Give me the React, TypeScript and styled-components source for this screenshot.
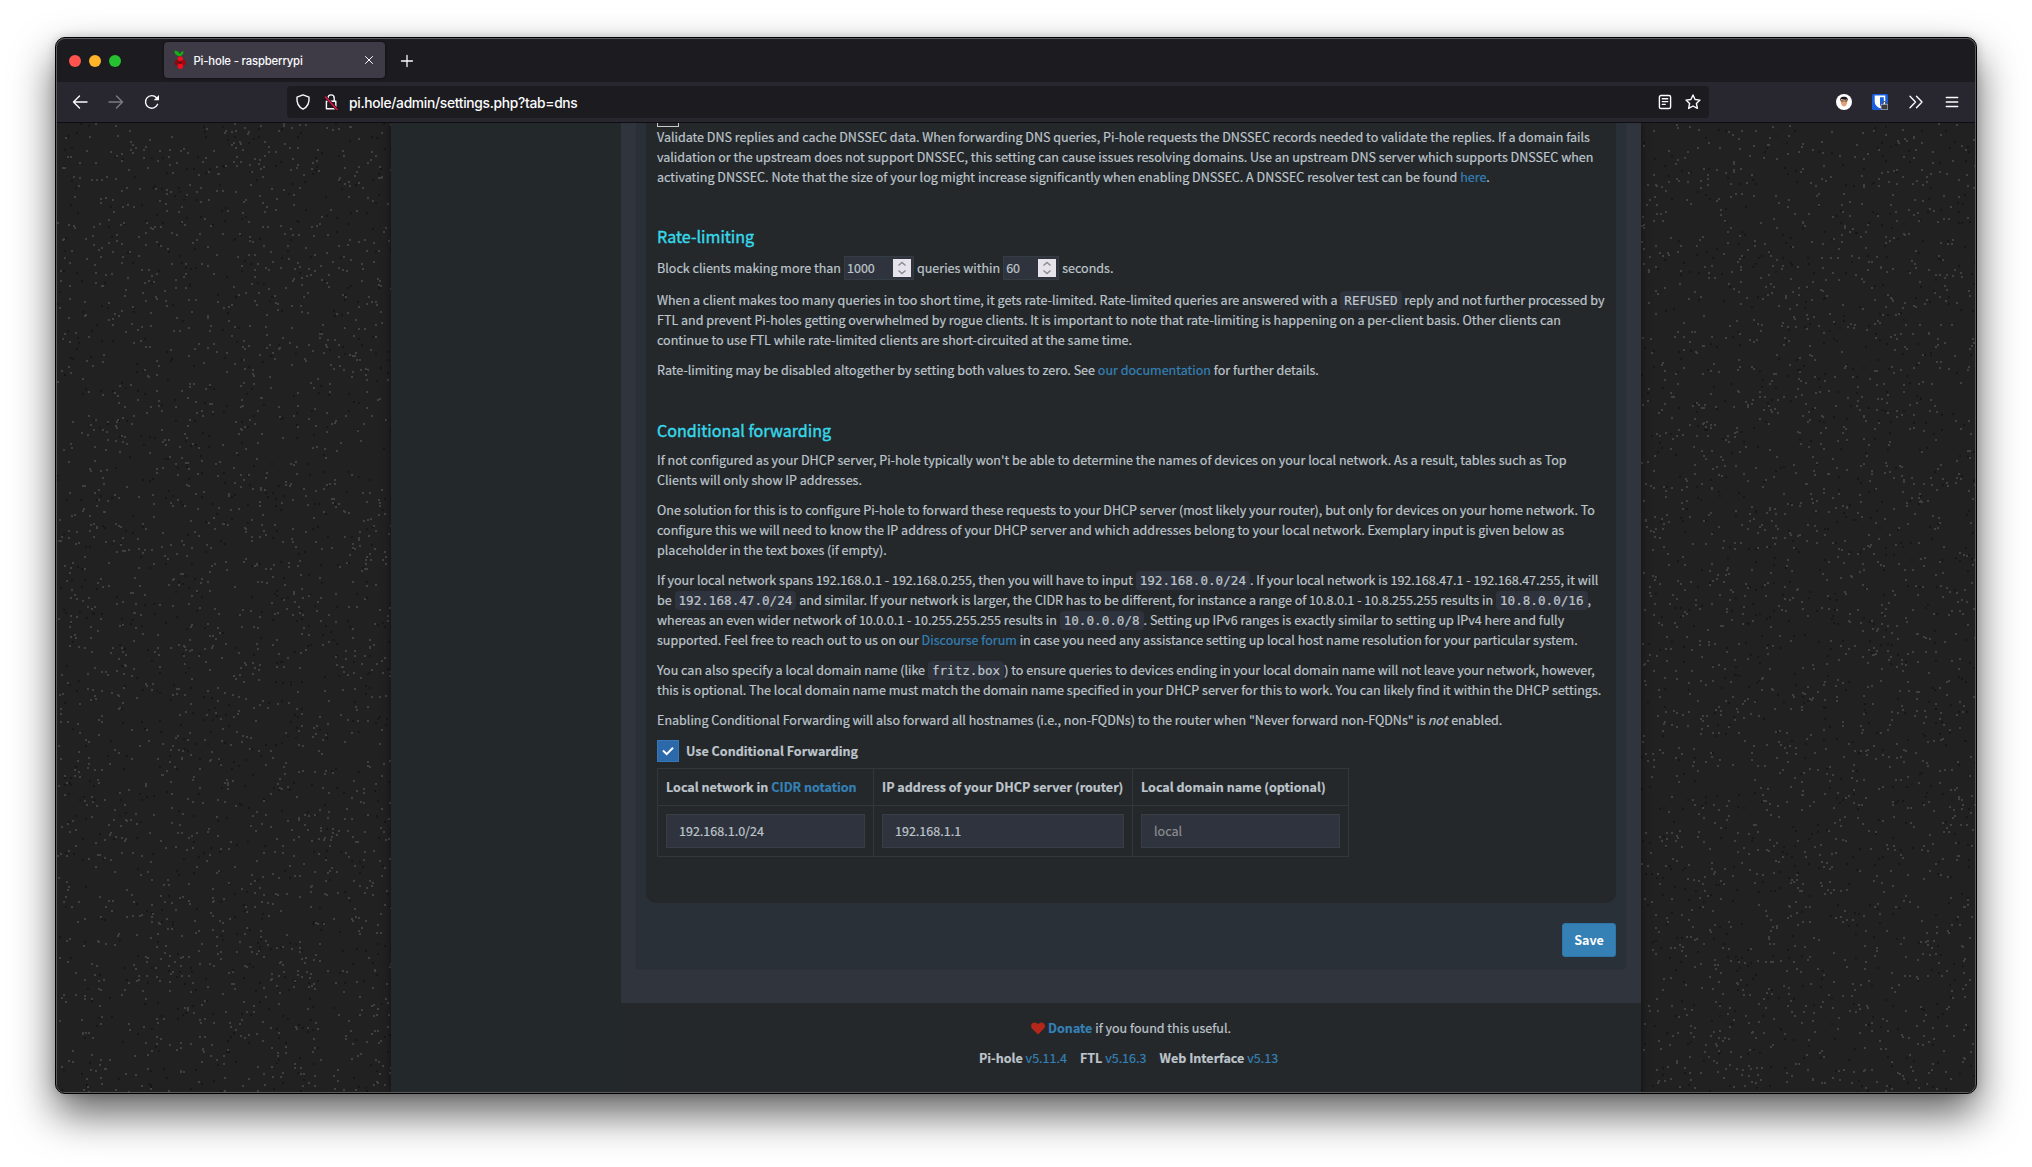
import React from 'react';
import styled, { createGlobalStyle } from 'styled-components';

const sans = "'Noto Sans CJK SC', 'Noto Sans', sans-serif";
const ui = "Inter, 'Liberation Sans', sans-serif";
const mono = "'DejaVu Sans Mono', 'Liberation Mono', monospace";

const GlobalStyle = createGlobalStyle`
  * { box-sizing: border-box; }
  body { margin: 0; background: #fff; overflow: hidden; }
`;

const Desktop = styled.div`
  width: 2032px;
  height: 1167px;
  padding: 37px 55px 73px;
  background: #fff;
`;

const Win = styled.div`
  width: 1922px;
  height: 1057px;
  display: flex;
  flex-direction: column;
  overflow: hidden;
  padding: 1px;
  border: 1px solid #000;
  border-radius: 10px;
  background: #5b5b5e;
  box-shadow: 0 20px 42px rgba(0, 0, 0, 0.62), 0 0 10px rgba(0, 0, 0, 0.18);
`;

const Inner = styled.div`
  flex: 1;
  min-height: 0;
  display: flex;
  flex-direction: column;
  overflow: hidden;
  border-radius: 8px;
  background: #1c1b20;
`;

const TabBar = styled.div`
  flex: none;
  height: 43px;
  display: flex;
  align-items: center;
  padding: 0 12px;
`;

const Lights = styled.div`
  display: flex;
  gap: 8px;
  width: 95px;
`;

const Light = styled.span<{ $c: string }>`
  width: 12px;
  height: 12px;
  border-radius: 50%;
  background: ${p => p.$c};
`;

const Tab = styled.div`
  width: 221px;
  height: 36px;
  margin-top: -1px;
  display: flex;
  align-items: center;
  padding: 0 10px 0 9px;
  border-radius: 4px;
  background: #3e3b46;
  box-shadow: 0 0 3px rgba(0, 0, 0, 0.6);
  color: #fbfbfe;
  font: 500 11.3px/16px ${ui};
  letter-spacing: -0.16px;
`;

const TabTitle = styled.span`
  flex: 1;
  padding: 2px 0 0 6.5px;
  white-space: nowrap;
`;

const NewTab = styled.span`
  display: flex;
  margin-left: 15px;
`;

const NavBar = styled.div`
  flex: none;
  height: 41px;
  display: flex;
  align-items: center;
  padding: 0 15px 0 15px;
  background: #28262f;
  border-bottom: 1px solid #0e0d12;
`;

const NavButtons = styled.div`
  display: flex;
  gap: 20px;
  width: 215px;
`;

const UrlBar = styled.div`
  width: 1422px;
  height: 32px;
  display: flex;
  align-items: center;
  gap: 12px;
  padding: 0 8px 0 8px;
  border-radius: 4px;
  background: #1c1b20;
`;

const UrlText = styled.span`
  flex: 1;
  margin-left: -2px;
  padding-top: 1px;
  color: #fbfbfe;
  font: 500 13.8px/20px ${ui};
  letter-spacing: -0.3px;
`;

const Tools = styled.div`
  margin-left: auto;
  display: flex;
  align-items: center;
  gap: 20px;
`;

const Page = styled.div`
  flex: 1;
  min-height: 0;
  display: grid;
  grid-template-columns: 334px 1250px 1fr;
  overflow: hidden;
  background: #212121;
`;

const Texture = styled.svg`
  display: block;
`;

const Wrapper = styled.div`
  display: grid;
  grid-template-columns: 230px 1020px;
  z-index: 1;
  background: #24282b;
  box-shadow: 0 0 8px rgba(0, 0, 0, 0.5);
`;

const Side = styled.aside`
  background: #23282b;
`;

const Main = styled.div`
  display: flex;
  flex-direction: column;
  color: #bec5cb;
  font: 400 12.54px/20px ${sans};
  -webkit-text-stroke: 0.2px;
`;

const Content = styled.div`
  height: 880px;
  padding: 0 15px 35px;
  background: #30343d;
`;

const Box = styled.div`
  height: 845px;
  padding: 0 10px 11px;
  border-radius: 0 0 3px 3px;
  background: #2a3037;
  box-shadow: 0 1px 1px rgba(40, 48, 50, 0.8);
  display: flex;
  flex-direction: column;
  justify-content: space-between;
  align-items: flex-end;
`;

const Panel = styled.div`
  width: 970px;
  height: 780px;
  padding: 0 11px;
  border-radius: 0 0 10px 10px;
  background: #24282b;
  white-space: nowrap;
`;

const EmptyCheck = styled.div`
  width: 22px;
  height: 4px;
  border: 1px solid #c9c9c9;
  border-top: 0;
`;

const P = styled.p`
  margin: 0 0 10px;
`;

const H4 = styled.h4<{ $raised?: boolean }>`
  margin: ${p => (p.$raised ? '39px 0 11px' : '40px 0 10px')};
  color: #37d8ea;
  font: 400 16.1px/20px ${sans};
  -webkit-text-stroke: 0.4px;
`;

const A = styled.a`
  color: #3581b6;
  text-decoration: none;
`;

const Em = styled.em`
  margin: 0 1px 0 -1px;
`;

const Code = styled.code`
  padding: 2px 4px;
  border-radius: 4px;
  background: #2f333d;
  font: 12.62px/1 ${mono};
`;

const RateRow = styled.div`
  height: 24px;
  margin: -1px 0 10px;
  display: flex;
  align-items: center;
  gap: 3px;
`;

const NumBox = styled.span<{ $w: number }>`
  width: ${p => p.$w}px;
  height: 24px;
  display: flex;
  align-items: center;
  justify-content: space-between;
  padding: 0 2px;
  border: 1px solid #353c42;
  background: #2f333d;
`;

const Spinner = styled.span`
  display: flex;
  width: 18px;
  height: 18px;
  background: #e6e4ea;
`;

const CheckRow = styled.div`
  height: 22px;
  display: flex;
  align-items: center;
  gap: 7px;
  font-weight: 700;
`;

const Check = styled.span`
  display: flex;
  align-items: center;
  justify-content: center;
  width: 22px;
  height: 22px;
  border: 1px solid #3677b5;
  background: #2c69ab;
`;

const Table = styled.div`
  margin-top: 6px;
  width: 692px;
  display: grid;
  grid-template-columns: 215px 258px 215px;
  grid-template-rows: 36px 50px;
  gap: 1px;
  padding: 1px;
  background: #32373d;
`;

const Cell = styled.div<{ $head?: boolean }>`
  display: flex;
  align-items: center;
  gap: 3px;
  padding: 0 8px;
  background: #24282b;
  font-weight: ${p => (p.$head ? 700 : 400)};
`;

const Input = styled.input`
  width: 100%;
  height: 34px;
  padding: 0 12px 2px;
  border: 1px solid #373e44;
  border-radius: 0;
  background: #2f333d;
  color: #bec5cb;
  font: 400 12.54px/20px ${sans};
  -webkit-text-stroke: 0.2px;
  &::placeholder { color: #8b8d90; opacity: 1; }
`;

const Save = styled.button`
  width: 54px;
  height: 34px;
  padding: 0;
  border: 1px solid #2f75a8;
  border-radius: 3px;
  background: #3581b6;
  color: #fff;
  font: 700 12.54px/20px ${sans};
  -webkit-text-stroke: 0;
`;

const Footer = styled.footer`
  flex: 1;
  display: flex;
  flex-direction: column;
  align-items: center;
  gap: 10px;
  padding-top: 15px;
  background: #24282b;
  white-space: nowrap;
`;

const FootLine = styled.div`
  height: 20px;
  display: flex;
  align-items: center;
  gap: 3px;
`;

const Versions = styled(FootLine)`
  gap: 13px;
  padding-right: 5px;
`;

function speckles(seed: number, count: number, w: number, h: number) {
  let s = seed;
  const next = () => {
    s = (s * 1664525 + 1013904223) % 4294967296;
    return s / 4294967296;
  };
  let d = '';
  for (let i = 0; i < count; i++) {
    d += `M${Math.floor(next() * w)} ${Math.floor(next() * h)}h2v2h-2z`;
  }
  return d;
}

const Noise = ({ seed }: { seed: number }) => (
  <Texture width="334" height="969" shapeRendering="crispEdges">
    <rect width="334" height="969" fill="#212121" />
    <path d={speckles(seed, 850, 334, 969)} fill="#171717" />
    <path d={speckles(seed + 77, 1950, 334, 969)} fill="#404040" />
  </Texture>
);

const stroke = { fill: 'none', stroke: '#fbfbfe', strokeWidth: 1.4, strokeLinecap: 'round', strokeLinejoin: 'round' } as const;

const Raspberry = () => (
  <svg width="14" height="20" viewBox="0 0 14 20">
    <path d="M7 6C3 6 1.500 3.500 1.500 0.500C4.500 0.800 6.300 2 7 4.500C7.300 2.500 8.500 1.300 10.500 1.200C10.500 3.500 9.500 5.500 7 6z" fill="#12b212" />
    <circle cx="7.300" cy="9" r="2.700" fill="#f60d1a" />
    <circle cx="4.200" cy="12.700" r="2.700" fill="#8a0a12" />
    <circle cx="10.300" cy="12.700" r="2.700" fill="#a00712" />
    <circle cx="7.300" cy="16.200" r="2.700" fill="#f60d1a" />
    <circle cx="7.300" cy="12.600" r="1.700" fill="#7b0a12" />
  </svg>
);

const Arrow = ({ dim }: { dim?: boolean }) => (
  <svg width="16" height="16" viewBox="0 0 16 16" opacity={dim ? 0.4 : 1}>
    <path {...stroke} transform={dim ? 'matrix(-1 0 0 1 16 0)' : undefined} d="M15 8H1.500M7.500 2L1.500 8l6 6" />
  </svg>
);

const SpinArrows = () => (
  <svg width="18" height="18" viewBox="0 0 18 18">
    <path d="M5.500 6.500L9 3.500l3.500 3M5.500 11.500l3.500 3 3.500-3" fill="none" stroke="#8d8a96" strokeWidth="1.500" />
  </svg>
);

export default function App() {
  return (
    <Desktop>
      <GlobalStyle />
      <Win>
        <Inner>
          <TabBar>
            <Lights>
              <Light $c="#ff544d" />
              <Light $c="#ffb429" />
              <Light $c="#26c131" />
            </Lights>
            <Tab>
              <Raspberry />
              <TabTitle>Pi-hole - raspberrypi</TabTitle>
              <svg width="12" height="12" viewBox="0 0 12 12"><path {...stroke} strokeWidth="1" d="M2.500 2.500l7 7M9.500 2.500l-7 7" /></svg>
            </Tab>
            <NewTab>
              <svg width="14" height="14" viewBox="0 0 14 14"><path {...stroke} strokeWidth="1.300" d="M7 1.500v11M1.500 7h11" /></svg>
            </NewTab>
          </TabBar>
          <NavBar>
            <NavButtons>
              <Arrow />
              <Arrow dim />
              <svg width="16" height="16" viewBox="0 0 16 16">
                <path {...stroke} d="M13.600 10.300A6.300 6.300 0 1 1 12.500 3.700" />
                <path d="M15 1v5.300H9.700z" fill="#fbfbfe" />
              </svg>
            </NavButtons>
            <UrlBar>
              <svg width="16" height="16" viewBox="0 0 16 16"><path {...stroke} d="M8 .9l6 2.300c.5 4.800-.9 9.300-6 12-5.100-2.700-6.500-7.200-6-12z" /></svg>
              <svg width="16" height="16" viewBox="0 0 16 16">
                <path {...stroke} d="M5 7V4a3 3 0 0 1 6.200 0v3M3.400 7.200h9.400v7.600H3.400z" />
                <path d="M2.500 3L14 15.500" stroke="#1c1b20" strokeWidth="3" />
                <path d="M2.500 3L14 15.500" stroke="#ee1144" strokeWidth="1.400" strokeLinecap="round" />
              </svg>
              <UrlText>pi.hole/admin/settings.php?tab=dns</UrlText>
              <svg width="16" height="16" viewBox="0 0 16 16"><path {...stroke} d="M4 1.500h8a1.600 1.600 0 0 1 1.600 1.600v9.800A1.600 1.600 0 0 1 12 14.500H4a1.600 1.600 0 0 1-1.600-1.600V3.100A1.600 1.600 0 0 1 4 1.500zM5.300 4.800h5.400M5.300 7.600h5.400M5.300 10.400h2.900" /></svg>
              <svg width="16" height="16" viewBox="0 0 16 16"><path {...stroke} d="M8 1l2.100 4.500 4.900.6-3.600 3.400 1 4.900L8 12l-4.400 2.400 1-4.900L1 6.100l4.900-.6z" /></svg>
            </UrlBar>
            <Tools>
              <svg width="16" height="16" viewBox="0 0 16 16">
                <circle cx="8" cy="8" r="8" fill="#fff" />
                <path d="M4.700 6h6.600c.2 3.500-1.100 6.500-3.300 6.500S4.500 9.500 4.700 6z" fill="#e0a078" />
                <path d="M4.200 7c-.6-2.800 1.100-4.300 3.700-4.300s4.500 1.500 3.900 4.300l-.8-1.500c-1.900.4-4.200.3-6-.2z" fill="#1b1513" />
                <path d="M4.900 7h2.600M8.500 7h2.600" stroke="#2a2320" strokeWidth=".8" />
              </svg>
              <svg width="16" height="16" viewBox="0 0 16 16">
                <rect width="16" height="16" rx="1.500" fill="#175ddc" />
                <path d="M2.700 1.500h10.600V8c0 3-2.500 5-5.300 6.300C5.200 13 2.700 11 2.700 8z" fill="#fff" />
                <path d="M8 3.200h3.800V8c0 2-1.700 3.500-3.800 4.600z" fill="#175ddc" />
                <rect x="9" y="10.300" width="6.800" height="5.500" rx="1" fill="#3c3c3c" stroke="#d8d8d8" strokeWidth=".7" />
                <path d="M10.700 10.300V9.200a1.700 1.700 0 0 1 3.400 0v1.100" fill="none" stroke="#555" strokeWidth="1.200" />
              </svg>
              <svg width="16" height="16" viewBox="0 0 16 16"><path {...stroke} d="M2 2.300L7.500 8 2 13.700M8.500 2.300L14 8l-5.500 5.700" /></svg>
              <svg width="16" height="16" viewBox="0 0 16 16"><path {...stroke} d="M2.300 3.500h11.400M2.300 8h11.400M2.300 12.500h11.400" /></svg>
            </Tools>
          </NavBar>
          <Page>
            <Noise seed={11} />
            <Wrapper>
              <Side />
              <Main>
                <Content>
                  <Box>
                    <Panel>
                      <EmptyCheck />
                      <P>
                        Validate DNS replies and cache DNSSEC data. When forwarding DNS queries, Pi-hole requests the DNSSEC records needed to validate the replies. If a domain fails<br />
                        validation or the upstream does not support DNSSEC, this setting can cause issues resolving domains. Use an upstream DNS server which supports DNSSEC when<br />
                        activating DNSSEC. Note that the size of your log might increase significantly when enabling DNSSEC. A DNSSEC resolver test can be found <A>here</A>.
                      </P>
                      <H4 $raised>Rate-limiting</H4>
                      <RateRow>
                        <span>Block clients making more than</span>
                        <NumBox $w={70}>1000<Spinner><SpinArrows /></Spinner></NumBox>
                        <span>queries within</span>
                        <NumBox $w={56}>60<Spinner><SpinArrows /></Spinner></NumBox>
                        <span>seconds.</span>
                      </RateRow>
                      <P>
                        When a client makes too many queries in too short time, it gets rate-limited. Rate-limited queries are answered with a <Code>REFUSED</Code> reply and not further processed by<br />
                        FTL and prevent Pi-holes getting overwhelmed by rogue clients. It is important to note that rate-limiting is happening on a per-client basis. Other clients can<br />
                        continue to use FTL while rate-limited clients are short-circuited at the same time.
                      </P>
                      <P>Rate-limiting may be disabled altogether by setting both values to zero. See <A>our documentation</A> for further details.</P>
                      <H4>Conditional forwarding</H4>
                      <P>
                        If not configured as your DHCP server, Pi-hole typically won't be able to determine the names of devices on your local network. As a result, tables such as Top<br />
                        Clients will only show IP addresses.
                      </P>
                      <P>
                        One solution for this is to configure Pi-hole to forward these requests to your DHCP server (most likely your router), but only for devices on your home network. To<br />
                        configure this we will need to know the IP address of your DHCP server and which addresses belong to your local network. Exemplary input is given below as<br />
                        placeholder in the text boxes (if empty).
                      </P>
                      <P>
                        If your local network spans 192.168.0.1 - 192.168.0.255, then you will have to input <Code>192.168.0.0/24</Code>. If your local network is 192.168.47.1 - 192.168.47.255, it will<br />
                        be <Code>192.168.47.0/24</Code> and similar. If your network is larger, the CIDR has to be different, for instance a range of 10.8.0.1 - 10.8.255.255 results in <Code>10.8.0.0/16</Code>,<br />
                        whereas an even wider network of 10.0.0.1 - 10.255.255.255 results in <Code>10.0.0.0/8</Code>. Setting up IPv6 ranges is exactly similar to setting up IPv4 here and fully<br />
                        supported. Feel free to reach out to us on our <A>Discourse forum</A> in case you need any assistance setting up local host name resolution for your particular system.
                      </P>
                      <P>
                        You can also specify a local domain name (like <Code>fritz.box</Code>) to ensure queries to devices ending in your local domain name will not leave your network, however,<br />
                        this is optional. The local domain name must match the domain name specified in your DHCP server for this to work. You can likely find it within the DHCP settings.
                      </P>
                      <P>Enabling Conditional Forwarding will also forward all hostnames (i.e., non-FQDNs) to the router when "Never forward non-FQDNs" is <Em>not</Em> enabled.</P>
                      <CheckRow>
                        <Check><svg width="14" height="12" viewBox="0 0 14 12"><path d="M2 5.500l3.700 3.700L12 2.800" fill="none" stroke="#fff" strokeWidth="2" /></svg></Check>
                        Use Conditional Forwarding
                      </CheckRow>
                      <Table>
                        <Cell $head>Local network in <A>CIDR notation</A></Cell>
                        <Cell $head>IP address of your DHCP server (router)</Cell>
                        <Cell $head>Local domain name (optional)</Cell>
                        <Cell><Input defaultValue="192.168.1.0/24" /></Cell>
                        <Cell><Input defaultValue="192.168.1.1" /></Cell>
                        <Cell><Input placeholder="local" /></Cell>
                      </Table>
                    </Panel>
                    <Save>Save</Save>
                  </Box>
                </Content>
                <Footer>
                  <FootLine>
                    <svg width="14" height="13" viewBox="0 0 14 13"><path d="M7 12.500L1.200 6.700C-.4 5-.2 2.500 1.300 1.300 3 0 5.300.4 7 2.300 8.700.4 11 0 12.700 1.300c1.500 1.200 1.700 3.700.1 5.400z" fill="#b5271a" /></svg>
                    <span><A as="b">Donate</A> if you found this useful.</span>
                  </FootLine>
                  <Versions>
                    <span><b>Pi-hole</b> <A>v5.11.4</A></span>
                    <span><b>FTL</b> <A>v5.16.3</A></span>
                    <span><b>Web Interface</b> <A>v5.13</A></span>
                  </Versions>
                </Footer>
              </Main>
            </Wrapper>
            <Noise seed={42} />
          </Page>
        </Inner>
      </Win>
    </Desktop>
  );
}
